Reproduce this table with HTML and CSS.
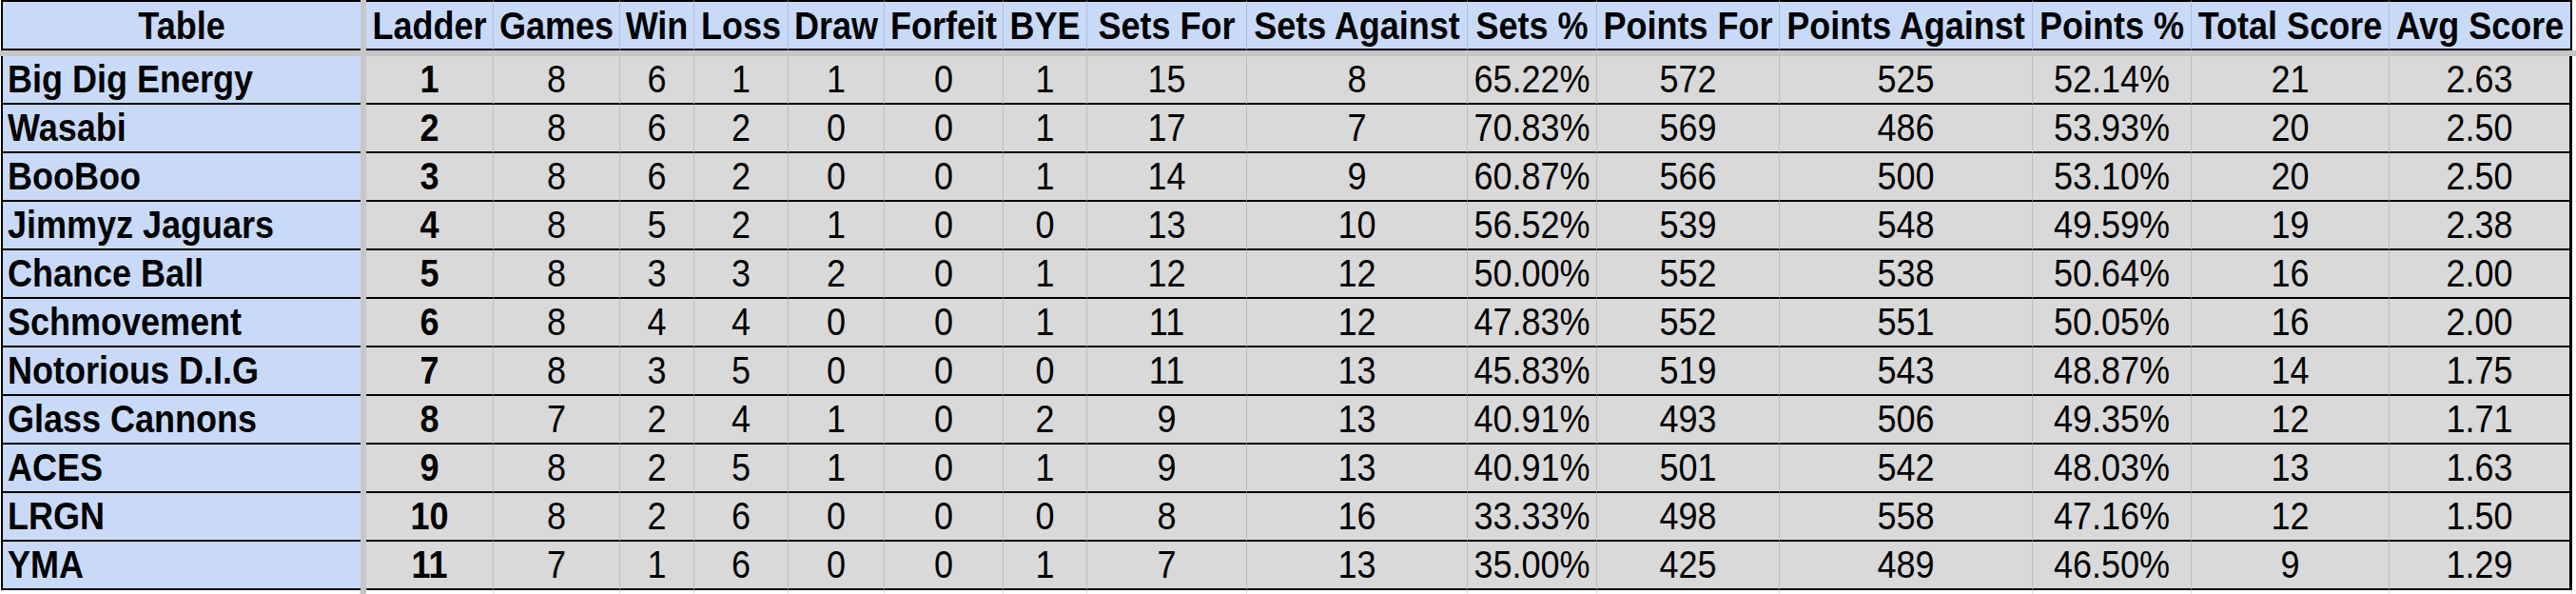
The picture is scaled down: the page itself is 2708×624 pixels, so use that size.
FILE: index.html
```html
<!DOCTYPE html>
<html>
<head>
<meta charset="utf-8">
<link rel="stylesheet" href="styles.css">
</head>
<body>
<div class="sheet">
  <div class="row head">
    <div class="cell name"><span>Table</span></div><div class="divider"></div>
    <div class="cell"><span>Ladder</span></div><div class="cell"><span>Games</span></div><div class="cell"><span>Win</span></div><div class="cell"><span>Loss</span></div><div class="cell"><span>Draw</span></div><div class="cell"><span>Forfeit</span></div><div class="cell"><span>BYE</span></div><div class="cell"><span>Sets For</span></div><div class="cell"><span>Sets Against</span></div><div class="cell"><span>Sets %</span></div><div class="cell"><span>Points For</span></div><div class="cell"><span>Points Against</span></div><div class="cell"><span>Points %</span></div><div class="cell"><span>Total Score</span></div><div class="cell last"><span>Avg Score</span></div>
  </div>
  <div class="freeze"></div>
  <div class="row data"><div class="cell name"><span>Big Dig Energy</span></div><div class="divider"></div><div class="cell rank"><span>1</span></div><div class="cell"><span>8</span></div><div class="cell"><span>6</span></div><div class="cell"><span>1</span></div><div class="cell"><span>1</span></div><div class="cell"><span>0</span></div><div class="cell"><span>1</span></div><div class="cell"><span>15</span></div><div class="cell"><span>8</span></div><div class="cell"><span>65.22%</span></div><div class="cell"><span>572</span></div><div class="cell"><span>525</span></div><div class="cell"><span>52.14%</span></div><div class="cell"><span>21</span></div><div class="cell last"><span>2.63</span></div></div>
  <div class="row data"><div class="cell name"><span>Wasabi</span></div><div class="divider"></div><div class="cell rank"><span>2</span></div><div class="cell"><span>8</span></div><div class="cell"><span>6</span></div><div class="cell"><span>2</span></div><div class="cell"><span>0</span></div><div class="cell"><span>0</span></div><div class="cell"><span>1</span></div><div class="cell"><span>17</span></div><div class="cell"><span>7</span></div><div class="cell"><span>70.83%</span></div><div class="cell"><span>569</span></div><div class="cell"><span>486</span></div><div class="cell"><span>53.93%</span></div><div class="cell"><span>20</span></div><div class="cell last"><span>2.50</span></div></div>
  <div class="row data"><div class="cell name"><span>BooBoo</span></div><div class="divider"></div><div class="cell rank"><span>3</span></div><div class="cell"><span>8</span></div><div class="cell"><span>6</span></div><div class="cell"><span>2</span></div><div class="cell"><span>0</span></div><div class="cell"><span>0</span></div><div class="cell"><span>1</span></div><div class="cell"><span>14</span></div><div class="cell"><span>9</span></div><div class="cell"><span>60.87%</span></div><div class="cell"><span>566</span></div><div class="cell"><span>500</span></div><div class="cell"><span>53.10%</span></div><div class="cell"><span>20</span></div><div class="cell last"><span>2.50</span></div></div>
  <div class="row data"><div class="cell name"><span>Jimmyz Jaguars</span></div><div class="divider"></div><div class="cell rank"><span>4</span></div><div class="cell"><span>8</span></div><div class="cell"><span>5</span></div><div class="cell"><span>2</span></div><div class="cell"><span>1</span></div><div class="cell"><span>0</span></div><div class="cell"><span>0</span></div><div class="cell"><span>13</span></div><div class="cell"><span>10</span></div><div class="cell"><span>56.52%</span></div><div class="cell"><span>539</span></div><div class="cell"><span>548</span></div><div class="cell"><span>49.59%</span></div><div class="cell"><span>19</span></div><div class="cell last"><span>2.38</span></div></div>
  <div class="row data"><div class="cell name"><span>Chance Ball</span></div><div class="divider"></div><div class="cell rank"><span>5</span></div><div class="cell"><span>8</span></div><div class="cell"><span>3</span></div><div class="cell"><span>3</span></div><div class="cell"><span>2</span></div><div class="cell"><span>0</span></div><div class="cell"><span>1</span></div><div class="cell"><span>12</span></div><div class="cell"><span>12</span></div><div class="cell"><span>50.00%</span></div><div class="cell"><span>552</span></div><div class="cell"><span>538</span></div><div class="cell"><span>50.64%</span></div><div class="cell"><span>16</span></div><div class="cell last"><span>2.00</span></div></div>
  <div class="row data"><div class="cell name"><span>Schmovement</span></div><div class="divider"></div><div class="cell rank"><span>6</span></div><div class="cell"><span>8</span></div><div class="cell"><span>4</span></div><div class="cell"><span>4</span></div><div class="cell"><span>0</span></div><div class="cell"><span>0</span></div><div class="cell"><span>1</span></div><div class="cell"><span>11</span></div><div class="cell"><span>12</span></div><div class="cell"><span>47.83%</span></div><div class="cell"><span>552</span></div><div class="cell"><span>551</span></div><div class="cell"><span>50.05%</span></div><div class="cell"><span>16</span></div><div class="cell last"><span>2.00</span></div></div>
  <div class="row data"><div class="cell name"><span>Notorious D.I.G</span></div><div class="divider"></div><div class="cell rank"><span>7</span></div><div class="cell"><span>8</span></div><div class="cell"><span>3</span></div><div class="cell"><span>5</span></div><div class="cell"><span>0</span></div><div class="cell"><span>0</span></div><div class="cell"><span>0</span></div><div class="cell"><span>11</span></div><div class="cell"><span>13</span></div><div class="cell"><span>45.83%</span></div><div class="cell"><span>519</span></div><div class="cell"><span>543</span></div><div class="cell"><span>48.87%</span></div><div class="cell"><span>14</span></div><div class="cell last"><span>1.75</span></div></div>
  <div class="row data"><div class="cell name"><span>Glass Cannons</span></div><div class="divider"></div><div class="cell rank"><span>8</span></div><div class="cell"><span>7</span></div><div class="cell"><span>2</span></div><div class="cell"><span>4</span></div><div class="cell"><span>1</span></div><div class="cell"><span>0</span></div><div class="cell"><span>2</span></div><div class="cell"><span>9</span></div><div class="cell"><span>13</span></div><div class="cell"><span>40.91%</span></div><div class="cell"><span>493</span></div><div class="cell"><span>506</span></div><div class="cell"><span>49.35%</span></div><div class="cell"><span>12</span></div><div class="cell last"><span>1.71</span></div></div>
  <div class="row data"><div class="cell name"><span>ACES</span></div><div class="divider"></div><div class="cell rank"><span>9</span></div><div class="cell"><span>8</span></div><div class="cell"><span>2</span></div><div class="cell"><span>5</span></div><div class="cell"><span>1</span></div><div class="cell"><span>0</span></div><div class="cell"><span>1</span></div><div class="cell"><span>9</span></div><div class="cell"><span>13</span></div><div class="cell"><span>40.91%</span></div><div class="cell"><span>501</span></div><div class="cell"><span>542</span></div><div class="cell"><span>48.03%</span></div><div class="cell"><span>13</span></div><div class="cell last"><span>1.63</span></div></div>
  <div class="row data"><div class="cell name"><span>LRGN</span></div><div class="divider"></div><div class="cell rank"><span>10</span></div><div class="cell"><span>8</span></div><div class="cell"><span>2</span></div><div class="cell"><span>6</span></div><div class="cell"><span>0</span></div><div class="cell"><span>0</span></div><div class="cell"><span>0</span></div><div class="cell"><span>8</span></div><div class="cell"><span>16</span></div><div class="cell"><span>33.33%</span></div><div class="cell"><span>498</span></div><div class="cell"><span>558</span></div><div class="cell"><span>47.16%</span></div><div class="cell"><span>12</span></div><div class="cell last"><span>1.50</span></div></div>
  <div class="row data"><div class="cell name"><span>YMA</span></div><div class="divider"></div><div class="cell rank"><span>11</span></div><div class="cell"><span>7</span></div><div class="cell"><span>1</span></div><div class="cell"><span>6</span></div><div class="cell"><span>0</span></div><div class="cell"><span>0</span></div><div class="cell"><span>1</span></div><div class="cell"><span>7</span></div><div class="cell"><span>13</span></div><div class="cell"><span>35.00%</span></div><div class="cell"><span>425</span></div><div class="cell"><span>489</span></div><div class="cell"><span>46.50%</span></div><div class="cell"><span>9</span></div><div class="cell last"><span>1.29</span></div></div>
  <div class="row blank"><div class="cell"></div><div class="divider"></div><div class="cell"></div><div class="cell"></div><div class="cell"></div><div class="cell"></div><div class="cell"></div><div class="cell"></div><div class="cell"></div><div class="cell"></div><div class="cell"></div><div class="cell"></div><div class="cell"></div><div class="cell"></div><div class="cell"></div><div class="cell"></div><div class="cell"></div></div>
</div>
</body>
</html>
```
FILE: styles.css
```css
html, body {
  margin: 0;
  padding: 0;
  background: #ffffff;
}
body {
  font-family: "Liberation Sans", Arial, sans-serif;
  color: #000000;
  overflow: hidden;
}
.sheet {
  padding-left: 1px;
}
.row {
  display: grid;
  grid-template-columns: 378px 6px 134px 133px 78px 99px 101px 125px 88px 168px 232px 136px 192px 266px 167px 208px 192px;
}
.cell {
  box-sizing: border-box;
  display: flex;
  align-items: flex-end;
  justify-content: center;
  font-size: 36px;
  line-height: 36px;
  white-space: nowrap;
  overflow: hidden;
  padding-bottom: 4px;
}
.cell span {
  display: inline-block;
  transform: scaleY(1.12);
  transform-origin: 50% 100%;
}
.divider {
  background: #c6c6c6;
}
.freeze {
  height: 6px;
  margin-left: -1px;
  background: #c6c6c6;
}
.head .cell {
  height: 53px;
  background: #c9daf8;
  border-top: 2px solid #000;
  border-bottom: 2px solid #000;
  border-right: 1px solid #b2bdd0;
  font-weight: bold;
  padding-bottom: 3px;
}
.head .name {
  border-left: 2px solid #000;
  border-right: none;
}
.head .last {
  border-right: 2px solid #000;
}
.data .cell {
  height: 51px;
  background: #d9d9d9;
  border-bottom: 2px solid #000;
  border-right: 1px solid #bdbdbd;
}
.data .name {
  background: #c9daf8;
  border-left: 2px solid #000;
  border-right: none;
  justify-content: flex-start;
  padding-left: 5px;
  font-weight: bold;
}
.data .rank {
  font-weight: bold;
}
.data .last {
  border-right: 3px solid #000;
}
.blank .cell {
  height: 20px;
  background: #ffffff;
  border-right: 1px solid #e2e2e2;
}
```
